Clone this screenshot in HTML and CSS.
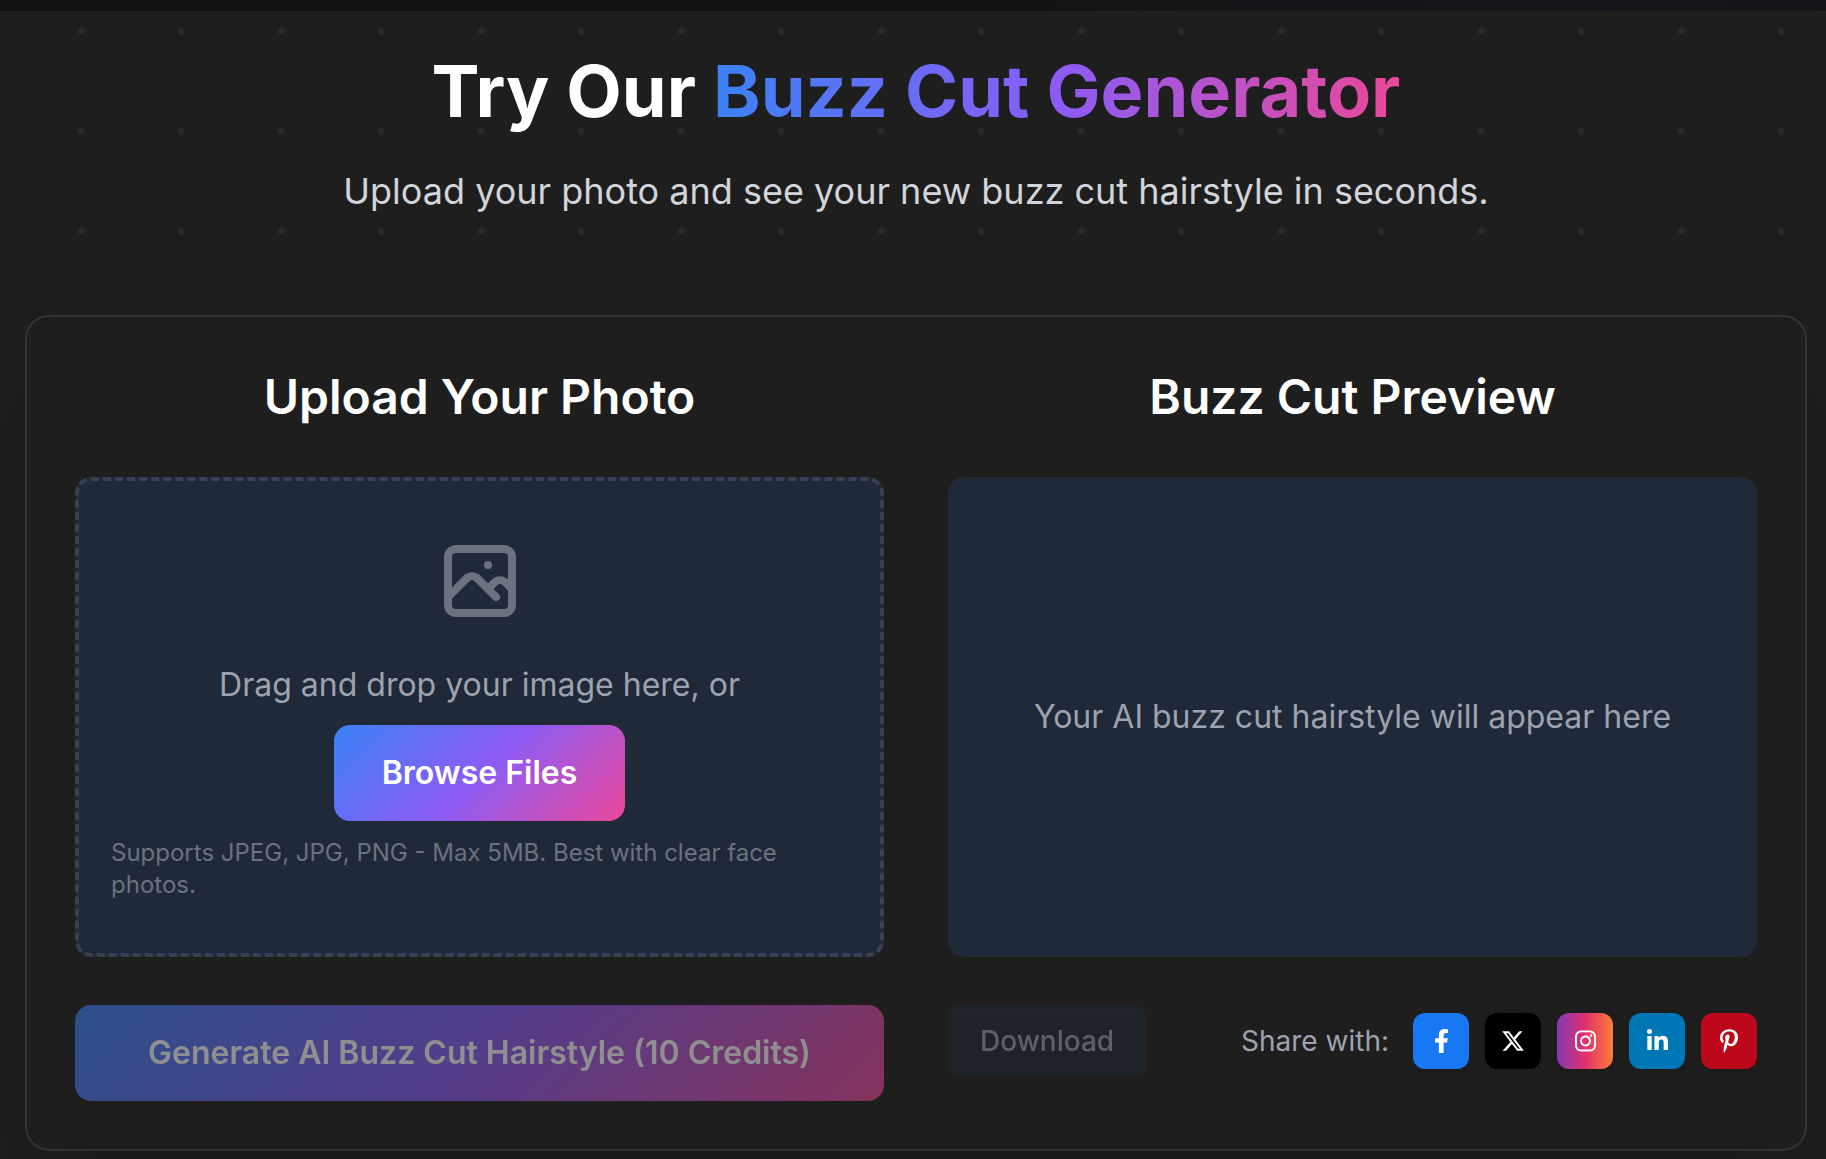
FILE: index.html
```html
<!DOCTYPE html>
<html lang="en">
<head>
    <meta charset="UTF-8">
    <meta name="viewport" content="width=device-width, initial-scale=1.0">
    <title>Buzz Cut Generator</title>
    <link rel="stylesheet" href="styles.css">
</head>
<body>
    <section class="generator">
        <div class="header">
            <h1>Try Our <span class="gradient-text">Buzz Cut Generator</span></h1>
            <p>Upload your photo and see your new buzz cut hairstyle in seconds.</p>
        </div>

        <div class="card">
            <div class="column">
                <h2>Upload Your Photo</h2>
                <div class="dropzone" id="dropzone">
                    <svg class="dropzone-icon" viewBox="0 0 24 24" fill="none" stroke="currentColor" stroke-width="2" stroke-linecap="round" stroke-linejoin="round" aria-hidden="true">
                        <path d="M4 16l4.586-4.586a2 2 0 012.828 0L16 16m-2-2l1.586-1.586a2 2 0 012.828 0L20 14m-6-6h.01M6 20h12a2 2 0 002-2V6a2 2 0 00-2-2H6a2 2 0 00-2 2v12a2 2 0 002 2z"/>
                    </svg>
                    <p class="dropzone-text">Drag and drop your image here, or</p>
                    <button type="button" class="btn">Browse Files</button>
                    <p class="dropzone-hint">Supports JPEG, JPG, PNG - Max 5MB. Best with clear face photos.</p>
                </div>
                <button type="button" class="btn btn-generate" disabled>Generate AI Buzz Cut Hairstyle (10 Credits)</button>
            </div>

            <div class="column">
                <h2>Buzz Cut Preview</h2>
                <div class="preview">
                    <p>Your AI buzz cut hairstyle will appear here</p>
                </div>
                <div class="actions">
                    <button type="button" class="btn-download" disabled>Download</button>
                    <div class="share">
                        <span class="share-label">Share with:</span>
                        <div class="share-links">
                            <a href="#" class="share-link facebook" aria-label="Facebook">
                                <svg viewBox="0 0 320 512"><path d="M279.14 288l14.22-92.66h-88.91v-60.13c0-25.35 12.42-50.06 52.24-50.06h40.42V6.26S260.43 0 225.36 0c-73.22 0-121.08 44.38-121.08 124.72v70.62H22.89V288h81.39v224h100.17V288z"/></svg>
                            </a>
                            <a href="#" class="share-link x" aria-label="X">
                                <svg viewBox="0 0 512 512"><path d="M389.2 48h70.6L305.6 224.2 487 464H345L233.7 318.6 106.5 464H35.8L200.7 275.5 26.8 48H172.4L272.9 180.9 389.2 48zM364.4 421.8h39.1L151.1 88h-42L364.4 421.8z"/></svg>
                            </a>
                            <a href="#" class="share-link instagram" aria-label="Instagram">
                                <svg viewBox="0 0 448 512"><path d="M224.1 141c-63.6 0-114.9 51.3-114.9 114.9s51.3 114.9 114.9 114.9S339 319.5 339 255.9 287.7 141 224.1 141zm0 189.6c-41.1 0-74.7-33.5-74.7-74.7s33.5-74.7 74.7-74.7 74.7 33.5 74.7 74.7-33.6 74.7-74.7 74.7zm146.4-194.3c0 14.9-12 26.8-26.8 26.8-14.9 0-26.8-12-26.8-26.8s12-26.8 26.8-26.8 26.8 12 26.8 26.8zm76.1 27.2c-1.7-35.9-9.9-67.7-36.2-93.9-26.2-26.2-58-34.4-93.9-36.2-37-2.1-147.9-2.1-184.9 0-35.8 1.7-67.6 9.9-93.9 36.1s-34.4 58-36.2 93.9c-2.1 37-2.1 147.9 0 184.9 1.7 35.9 9.9 67.7 36.2 93.9s58 34.4 93.9 36.2c37 2.1 147.9 2.1 184.9 0 35.9-1.7 67.7-9.9 93.9-36.2 26.2-26.2 34.4-58 36.2-93.9 2.1-37 2.1-147.8 0-184.8zM398.8 388c-7.8 19.6-22.9 34.7-42.6 42.6-29.5 11.7-99.5 9-132.1 9s-102.7 2.6-132.1-9c-19.6-7.8-34.7-22.9-42.6-42.6-11.7-29.5-9-99.5-9-132.1s-2.6-102.7 9-132.1c7.8-19.6 22.9-34.7 42.6-42.6 29.5-11.7 99.5-9 132.1-9s102.7-2.6 132.1 9c19.6 7.8 34.7 22.9 42.6 42.6 11.7 29.5 9 99.5 9 132.1s2.7 102.7-9 132.1z"/></svg>
                            </a>
                            <a href="#" class="share-link linkedin" aria-label="LinkedIn">
                                <svg viewBox="0 0 448 512"><path d="M100.28 448H7.4V148.9h92.88zM53.79 108.1C24.09 108.1 0 83.5 0 53.8a53.79 53.79 0 0 1 107.58 0c0 29.7-24.1 54.3-53.79 54.3zM447.9 448h-92.68V302.4c0-34.7-.7-79.2-48.29-79.2-48.29 0-55.69 37.7-55.69 76.7V448h-92.78V148.9h89.08v40.8h1.3c12.4-23.5 42.69-48.3 87.88-48.3 94 0 111.28 61.9 111.28 142.3V448z"/></svg>
                            </a>
                            <a href="#" class="share-link pinterest" aria-label="Pinterest">
                                <svg viewBox="0 0 384 512"><path d="M204 6.5C101.4 6.5 0 74.9 0 185.6 0 256 39.6 296 63.6 296c9.9 0 15.6-27.6 15.6-35.4 0-9.3-23.7-29.1-23.7-67.8 0-80.4 61.2-137.4 140.4-137.4 68.1 0 118.5 38.7 118.5 109.8 0 53.1-21.3 152.7-90.3 152.7-24.9 0-46.2-18-46.2-43.8 0-37.8 26.4-74.4 26.4-113.4 0-66.2-93.9-54.2-93.9 25.8 0 16.8 2.1 35.4 9.6 50.7-13.8 59.4-42 147.9-42 209.1 0 18.9 2.7 37.5 4.5 56.4 3.4 3.8 1.7 3.4 6.9 1.5 50.4-69 48.6-82.5 71.4-172.8 12.3 23.4 44.1 36 69.3 36 106.2 0 153.9-103.5 153.9-196.8C384 71.3 298.2 6.5 204 6.5z"/></svg>
                            </a>
                        </div>
                    </div>
                </div>
            </div>
        </div>
    </section>
</body>
</html>
```
FILE: styles.css
```css
* {
    margin: 0;
    padding: 0;
    box-sizing: border-box;
}

body {
    font-family: Inter, 'Liberation Sans', sans-serif;
    background: linear-gradient(90deg, #121212 50%, #18151c 88%, #151318 100%);
    color: #fff;
    padding-top: 11px;
}

button {
    font-family: inherit;
    border: none;
}

.generator {
    padding: 40px 19px 8px 25px;
    background-color: #1e1e1e;
    background-image: radial-gradient(circle, #292929 3px, transparent 4px);
    background-size: 100px 100px;
    background-position: 31px -30px;
}

.header {
    text-align: center;
    margin-bottom: 96px;
}

.header h1 {
    font-size: 72px;
    line-height: 80px;
    font-weight: 700;
    margin-bottom: 32px;
}

.header p {
    font-size: 36px;
    line-height: 56px;
    color: #d1d5db;
}

.gradient-text {
    background: linear-gradient(90deg, #3b82f6 0%, #8b5cf6 50%, #ec4899 100%);
    -webkit-background-clip: text;
    background-clip: text;
    color: transparent;
}

.card {
    display: grid;
    grid-template-columns: 1fr 1fr;
    gap: 64px;
    padding: 48px;
    background: #1e1e1e;
    border: 2px solid #333;
    border-radius: 24px;
    box-shadow: 0 50px 100px -24px rgba(0, 0, 0, 0.25);
}

.column {
    display: flex;
    flex-direction: column;
    gap: 48px;
}

.column h2 {
    font-size: 48px;
    line-height: 64px;
    font-weight: 600;
    text-align: center;
}

.dropzone,
.preview {
    display: flex;
    flex-direction: column;
    align-items: center;
    justify-content: center;
    min-height: 480px;
    padding: 32px;
    background: #1f2937;
    border-radius: 16px;
    font-size: 32px;
    line-height: 48px;
    color: #9ca3af;
}

.dropzone {
    border: 4px dashed #374151;
}

.dropzone-icon {
    width: 96px;
    height: 96px;
    margin-bottom: 32px;
    color: #6b7280;
}

.dropzone-text {
    margin-bottom: 16px;
}

.dropzone-hint {
    margin-top: 16px;
    font-size: 24px;
    line-height: 32px;
    color: #6b7280;
}

.btn {
    padding: 24px 48px;
    font-size: 32px;
    line-height: 48px;
    font-weight: 600;
    color: #fff;
    background: linear-gradient(135deg, #3b82f6 0%, #8b5cf6 50%, #ec4899 100%);
    border-radius: 16px;
    cursor: pointer;
}

.btn:disabled,
.btn-download:disabled {
    opacity: 0.5;
    cursor: not-allowed;
}

.actions {
    display: flex;
    align-items: center;
    justify-content: space-between;
}

.btn-download {
    padding: 16px 32px;
    font-size: 28px;
    line-height: 40px;
    font-weight: 500;
    color: #9ca3af;
    background: #1f2937;
    border-radius: 12px;
}

.share {
    display: flex;
    align-items: center;
    gap: 24px;
}

.share-label {
    font-size: 28px;
    line-height: 40px;
    color: #9ca3af;
}

.share-links {
    display: flex;
    gap: 16px;
}

.share-link {
    display: flex;
    align-items: center;
    justify-content: center;
    width: 56px;
    height: 56px;
    color: #fff;
    border-radius: 12px;
    box-shadow: 0 4px 8px rgba(0, 0, 0, 0.1);
}

.share-link svg {
    height: 24px;
    fill: currentColor;
}

.facebook {
    background: #1877f2;
}

.x {
    background: #000;
}

.instagram {
    background: linear-gradient(90deg, #833ab4, #e1306c, #fd7e34);
}

.linkedin {
    background: #0077b5;
}

.pinterest {
    background: #bd081c;
}
```
